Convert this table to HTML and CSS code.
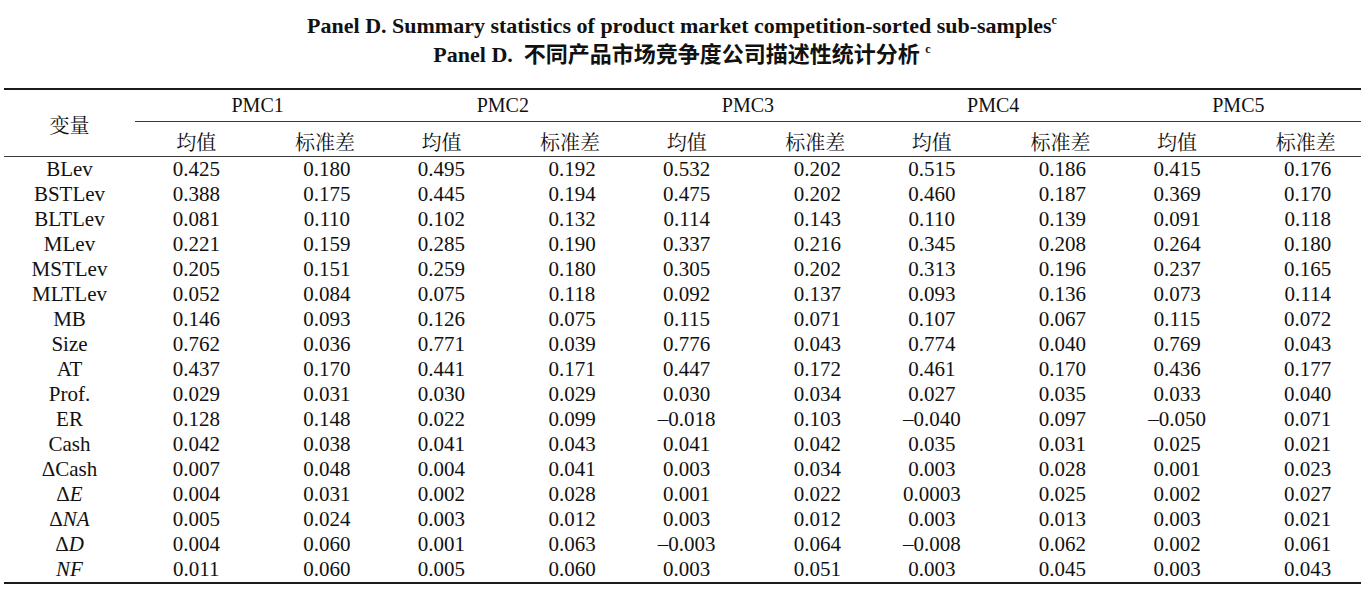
FILE: index.html
```html
<!DOCTYPE html>
<html lang="zh">
<head>
<meta charset="utf-8">
<title>Panel D</title>
<link rel="stylesheet" href="styles.css">
</head>
<body>
<div class="title">
  <div class="t1">Panel D. Summary statistics of product market competition-sorted sub-samples<span class="sup">c</span></div>
  <div class="t2">Panel D.&nbsp; <span class="zh">不同产品市场竞争度公司描述性统计分析</span> <span class="sup">c</span></div>
</div>
<table class="stats">
  <colgroup>
    <col class="c-var">
    <col><col><col><col><col><col><col><col><col><col>
  </colgroup>
  <thead>
    <tr class="grp">
      <th rowspan="2" class="var-h zhc">变量</th>
      <th colspan="2">PMC1</th>
      <th colspan="2">PMC2</th>
      <th colspan="2">PMC3</th>
      <th colspan="2">PMC4</th>
      <th colspan="2">PMC5</th>
    </tr>
    <tr class="sub">
      <th class="zhc">均值</th><th class="zhc sd">标准差</th>
      <th class="zhc">均值</th><th class="zhc sd">标准差</th>
      <th class="zhc">均值</th><th class="zhc sd">标准差</th>
      <th class="zhc">均值</th><th class="zhc sd">标准差</th>
      <th class="zhc">均值</th><th class="zhc sd">标准差</th>
    </tr>
  </thead>
  <tbody>
    <tr><td>BLev</td><td>0.425</td><td class="sd">0.180</td><td>0.495</td><td class="sd">0.192</td><td>0.532</td><td class="sd">0.202</td><td>0.515</td><td class="sd">0.186</td><td>0.415</td><td class="sd">0.176</td></tr>
    <tr><td>BSTLev</td><td>0.388</td><td class="sd">0.175</td><td>0.445</td><td class="sd">0.194</td><td>0.475</td><td class="sd">0.202</td><td>0.460</td><td class="sd">0.187</td><td>0.369</td><td class="sd">0.170</td></tr>
    <tr><td>BLTLev</td><td>0.081</td><td class="sd">0.110</td><td>0.102</td><td class="sd">0.132</td><td>0.114</td><td class="sd">0.143</td><td>0.110</td><td class="sd">0.139</td><td>0.091</td><td class="sd">0.118</td></tr>
    <tr><td>MLev</td><td>0.221</td><td class="sd">0.159</td><td>0.285</td><td class="sd">0.190</td><td>0.337</td><td class="sd">0.216</td><td>0.345</td><td class="sd">0.208</td><td>0.264</td><td class="sd">0.180</td></tr>
    <tr><td>MSTLev</td><td>0.205</td><td class="sd">0.151</td><td>0.259</td><td class="sd">0.180</td><td>0.305</td><td class="sd">0.202</td><td>0.313</td><td class="sd">0.196</td><td>0.237</td><td class="sd">0.165</td></tr>
    <tr><td>MLTLev</td><td>0.052</td><td class="sd">0.084</td><td>0.075</td><td class="sd">0.118</td><td>0.092</td><td class="sd">0.137</td><td>0.093</td><td class="sd">0.136</td><td>0.073</td><td class="sd">0.114</td></tr>
    <tr><td>MB</td><td>0.146</td><td class="sd">0.093</td><td>0.126</td><td class="sd">0.075</td><td>0.115</td><td class="sd">0.071</td><td>0.107</td><td class="sd">0.067</td><td>0.115</td><td class="sd">0.072</td></tr>
    <tr><td>Size</td><td>0.762</td><td class="sd">0.036</td><td>0.771</td><td class="sd">0.039</td><td>0.776</td><td class="sd">0.043</td><td>0.774</td><td class="sd">0.040</td><td>0.769</td><td class="sd">0.043</td></tr>
    <tr><td>AT</td><td>0.437</td><td class="sd">0.170</td><td>0.441</td><td class="sd">0.171</td><td>0.447</td><td class="sd">0.172</td><td>0.461</td><td class="sd">0.170</td><td>0.436</td><td class="sd">0.177</td></tr>
    <tr><td>Prof.</td><td>0.029</td><td class="sd">0.031</td><td>0.030</td><td class="sd">0.029</td><td>0.030</td><td class="sd">0.034</td><td>0.027</td><td class="sd">0.035</td><td>0.033</td><td class="sd">0.040</td></tr>
    <tr><td>ER</td><td>0.128</td><td class="sd">0.148</td><td>0.022</td><td class="sd">0.099</td><td>–0.018</td><td class="sd">0.103</td><td>–0.040</td><td class="sd">0.097</td><td>–0.050</td><td class="sd">0.071</td></tr>
    <tr><td>Cash</td><td>0.042</td><td class="sd">0.038</td><td>0.041</td><td class="sd">0.043</td><td>0.041</td><td class="sd">0.042</td><td>0.035</td><td class="sd">0.031</td><td>0.025</td><td class="sd">0.021</td></tr>
    <tr><td>ΔCash</td><td>0.007</td><td class="sd">0.048</td><td>0.004</td><td class="sd">0.041</td><td>0.003</td><td class="sd">0.034</td><td>0.003</td><td class="sd">0.028</td><td>0.001</td><td class="sd">0.023</td></tr>
    <tr><td>Δ<i>E</i></td><td>0.004</td><td class="sd">0.031</td><td>0.002</td><td class="sd">0.028</td><td>0.001</td><td class="sd">0.022</td><td>0.0003</td><td class="sd">0.025</td><td>0.002</td><td class="sd">0.027</td></tr>
    <tr><td>Δ<i>NA</i></td><td>0.005</td><td class="sd">0.024</td><td>0.003</td><td class="sd">0.012</td><td>0.003</td><td class="sd">0.012</td><td>0.003</td><td class="sd">0.013</td><td>0.003</td><td class="sd">0.021</td></tr>
    <tr><td>Δ<i>D</i></td><td>0.004</td><td class="sd">0.060</td><td>0.001</td><td class="sd">0.063</td><td>–0.003</td><td class="sd">0.064</td><td>–0.008</td><td class="sd">0.062</td><td>0.002</td><td class="sd">0.061</td></tr>
    <tr class="last"><td><i>NF</i></td><td>0.011</td><td class="sd">0.060</td><td>0.005</td><td class="sd">0.060</td><td>0.003</td><td class="sd">0.051</td><td>0.003</td><td class="sd">0.045</td><td>0.003</td><td class="sd">0.043</td></tr>
  </tbody>
</table>
</body>
</html>
```
FILE: styles.css
```css
html, body {
  margin: 0;
  padding: 0;
  background: #ffffff;
}
body {
  font-family: "Liberation Serif", "Times New Roman", serif;
  color: #111111;
}
.title {
  padding-top: 12px;
  margin-bottom: 20px;
  text-align: center;
  font-weight: 700;
  font-size: 22px;
  line-height: 27px;
  color: #111111;
}
.title .zh {
  font-family: "Noto Sans CJK SC", sans-serif;
  font-weight: 700;
}
.title .sup {
  font-size: 12px;
  vertical-align: 9px;
  line-height: 0;
}
.stats {
  border-collapse: separate;
  border-spacing: 0;
  table-layout: fixed;
  width: 1357px;
  margin-left: 4px;
  font-size: 20px;
  color: #111111;
}
.stats col { width: 122.6px; }
.stats col.c-var { width: 131px; }
.stats th, .stats td {
  padding: 0;
  font-weight: 400;
  text-align: center;
  vertical-align: middle;
  white-space: nowrap;
}
.zhc {
  font-family: "Noto Serif CJK SC", "Noto Sans CJK SC", serif;
  font-weight: 300;
}
.stats .grp th {
  border-top: 2px solid #1a1a1a;
  border-bottom: 1px solid #3a3a3a;
  height: 31px;
}
.stats .grp th.var-h {
  border-bottom: 1px solid #3a3a3a;
  padding-top: 2px;
}
.stats .sub th {
  height: 35px;
  padding-top: 4px;
  border-bottom: 1px solid #3a3a3a;
  box-sizing: border-box;
}
.stats th.sd { padding-left: 12px; }
.stats td.sd { padding-left: 16px; }
.stats tbody td {
  height: 25px;
  line-height: 25px;
  font-size: 21px;
}
.stats tbody tr.last td {
  border-bottom: 2px solid #1a1a1a;
}
```
